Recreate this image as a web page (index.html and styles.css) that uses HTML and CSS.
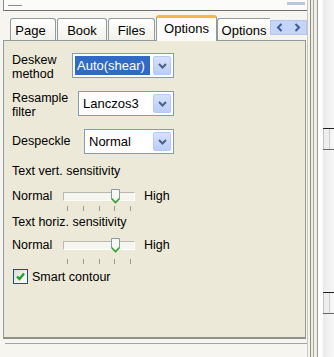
FILE: index.html
```html
<!DOCTYPE html>
<html lang="en">
<head>
    <meta charset="UTF-8">
    <title>Options</title>
    <link rel="stylesheet" href="styles.css">
</head>
<body>
    <div class="window">
        <div class="main">
            <div class="topbar">
                <span class="dash"></span>
                <span class="grip"></span>
            </div>
            <div class="tabs">
                <div class="tab tab-page">Page</div>
                <div class="tab tab-book">Book</div>
                <div class="tab tab-files">Files</div>
                <div class="tab tab-active">Options</div>
                <div class="tab tab-cut">Options</div>
                <div class="tab-scroll">
                    <svg width="8" height="9" viewBox="0 0 8 9"><polyline points="5.5,1 2,4.5 5.5,8" fill="none" stroke="#3d5a9a" stroke-width="2"/></svg>
                    <svg width="8" height="9" viewBox="0 0 8 9"><polyline points="2.5,1 6,4.5 2.5,8" fill="none" stroke="#3d5a9a" stroke-width="2"/></svg>
                </div>
            </div>
            <div class="panel">
                <div class="field field-deskew">
                    <div class="label">Deskew<br>method</div>
                    <div class="combo combo-deskew">
                        <span class="value selected">Auto(shear)</span>
                        <span class="drop"><svg width="9" height="6" viewBox="0 0 9 6"><polyline points="1,1 4.5,4.5 8,1" fill="none" stroke="#4d6185" stroke-width="2"/></svg></span>
                    </div>
                </div>
                <div class="field field-resample">
                    <div class="label">Resample<br>filter</div>
                    <div class="combo combo-resample">
                        <span class="value">Lanczos3</span>
                        <span class="drop"><svg width="9" height="6" viewBox="0 0 9 6"><polyline points="1,1 4.5,4.5 8,1" fill="none" stroke="#4d6185" stroke-width="2"/></svg></span>
                    </div>
                </div>
                <div class="field field-despeckle">
                    <div class="label">Despeckle</div>
                    <div class="combo combo-despeckle">
                        <span class="value">Normal</span>
                        <span class="drop"><svg width="9" height="6" viewBox="0 0 9 6"><polyline points="1,1 4.5,4.5 8,1" fill="none" stroke="#4d6185" stroke-width="2"/></svg></span>
                    </div>
                </div>

                <div class="caption caption-vert">Text vert. sensitivity</div>
                <div class="slider-row slider-vert">
                    <span class="slider-label">Normal</span>
                    <div class="track">
                        <svg class="thumb" width="11" height="15" viewBox="0 0 11 15">
                            <path d="M1.5 0.5 H9.5 V9.5 L5.5 13.5 L1.5 9.5 Z" fill="#f7f7f4" stroke="#8a97a6"/>
                            <polyline points="1.5,9.5 5.5,13.5 9.5,9.5" fill="none" stroke="#2aa02a" stroke-width="1.6"/>
                        </svg>
                    </div>
                    <span class="slider-high">High</span>
                </div>
                <div class="ticks ticks-vert"><i></i><i></i><i></i><i></i><i></i></div>

                <div class="caption caption-horiz">Text horiz. sensitivity</div>
                <div class="slider-row slider-horiz">
                    <span class="slider-label">Normal</span>
                    <div class="track">
                        <svg class="thumb" width="11" height="15" viewBox="0 0 11 15">
                            <path d="M1.5 0.5 H9.5 V9.5 L5.5 13.5 L1.5 9.5 Z" fill="#f7f7f4" stroke="#8a97a6"/>
                            <polyline points="1.5,9.5 5.5,13.5 9.5,9.5" fill="none" stroke="#2aa02a" stroke-width="1.6"/>
                        </svg>
                    </div>
                    <span class="slider-high">High</span>
                </div>
                <div class="ticks ticks-horiz"><i></i><i></i><i></i><i></i><i></i></div>

                <label class="check-row">
                    <span class="checkbox">
                        <svg width="11" height="11" viewBox="0 0 11 11"><polyline points="2,5.5 4.5,8 9,2.5" fill="none" stroke="#21a121" stroke-width="2.4"/></svg>
                    </span>
                    <span>Smart contour</span>
                </label>
            </div>
            <div class="bottom-edge"></div>
        </div>
        <div class="side">
            <div class="side-lines"></div>
            <div class="scroll-strip">
                <div class="scroll-mark mark-top"></div>
                <div class="scroll-mark mark-bottom"></div>
            </div>
        </div>
    </div>
</body>
</html>
```

FILE: styles.css
```css
* {
    box-sizing: border-box;
}
body {
    margin: 0;
    background: #f6f5ef;
    font-family: "Liberation Sans", Arial, sans-serif;
    font-size: 12.5px;
    color: #000;
}
.window {
    display: flex;
    width: 334px;
    height: 357px;
    overflow: hidden;
}
.main {
    width: 307px;
    flex: none;
}

/* strip above the tabs */
.topbar {
    margin-left: 3px;
    height: 11px;
    border-left: 1px solid #8c8c8c;
    border-bottom: 1px solid #6f6f6f;
    background: #fbfbf9;
    display: flex;
    align-items: flex-start;
    justify-content: space-between;
    padding: 0 2px 0 4px;
}
.dash {
    width: 14px;
    height: 1px;
    margin-top: 5px;
    background: #8c8c8c;
}
.grip {
    width: 18px;
    height: 3px;
    margin-top: 2px;
    background: #b9c6e0;
}

/* tabs */
.tabs {
    display: flex;
    align-items: flex-end;
    height: 29px;
    padding-left: 10px;
    background: #f6f5ef;
}
.tab {
    height: 22px;
    border: 1px solid #919b9c;
    border-bottom: none;
    border-radius: 3px 3px 0 0;
    background: linear-gradient(#ffffff, #f2f1ea);
    font-size: 13px;
    line-height: 24px;
    text-align: center;
    margin-right: 1px;
}
.tab-page { width: 46px; padding-right: 5px; }
.tab-book { width: 50px; }
.tab-files { width: 47px; }
.tab-active {
    width: 61px;
    height: 26px;
    margin-bottom: -1px;
    margin-right: 0;
    line-height: 22px;
    border-top: 3px solid #f3b64a;
    background: #fcfcfa;
    position: relative;
    z-index: 1;
}
.tab-cut {
    width: 53px;
    margin-right: 0;
    border-right: none;
    border-radius: 3px 0 0 0;
}
.tab-scroll {
    width: 37px;
    height: 15px;
    margin-bottom: 5px;
    background: #c6d5f6;
    border: 1px solid #b4c6ee;
    display: flex;
    align-items: center;
    justify-content: space-around;
}

/* panel */
.panel {
    margin-left: 3px;
    width: 303px;
    height: 299px;
    border: 1px solid #919b9c;
    border-bottom: 2px solid #8f8f88;
    background: #ece9d8;
    padding: 12px 0 0 8px;
}
.field {
    display: flex;
    align-items: flex-start;
    width: 162px;
    margin-bottom: 10px;
}
.label {
    line-height: 13.5px;
    margin-top: 1px;
}
.field-despeckle .label {
    margin-top: 6px;
}
.combo {
    margin-left: auto;
    height: 25px;
    border: 1px solid #7f9db9;
    background: #fff;
    display: flex;
    align-items: center;
    padding: 2px;
}
.combo-deskew { width: 102px; }
.combo-resample { width: 96px; }
.combo-despeckle { width: 90px; }
.value {
    flex: 1;
    height: 19px;
    line-height: 19px;
    padding-left: 2px;
    font-size: 13px;
    white-space: nowrap;
}
.value.selected {
    background: #316ac5;
    color: #fff;
    margin-right: 3px;
}
.drop {
    width: 18px;
    height: 19px;
    border: 1px solid #b7c9f1;
    border-radius: 2px;
    background: linear-gradient(#d6e2fd, #b9cdf7);
    display: flex;
    align-items: center;
    justify-content: center;
}

/* sliders */
.caption {
    line-height: 15px;
}
.caption-vert { margin-top: 1px; }
.caption-horiz { margin-top: 4px; }
.slider-row {
    display: flex;
    align-items: center;
    height: 16px;
}
.slider-vert { margin-top: 9px; }
.slider-horiz { margin-top: 7px; }
.slider-label {
    width: 51px;
}
.track {
    position: relative;
    width: 72px;
    height: 9px;
    border: 1px solid #b8b8b0;
    border-right-color: #fff;
    border-bottom-color: #fff;
    background: #f6f6f1;
}
.thumb {
    position: absolute;
    left: 46px;
    top: -4px;
}
.slider-high {
    margin-left: 9px;
}
.ticks {
    display: flex;
    justify-content: space-between;
    width: 72px;
    height: 5px;
    margin-left: 51px;
    padding: 0 4px;
}
.ticks i {
    width: 1px;
    background: #9a9a92;
}
.ticks-vert { margin-top: 2px; }
.ticks-horiz { margin-top: 6px; }

/* checkbox */
.check-row {
    display: flex;
    align-items: center;
    margin-top: 5px;
    margin-left: 1px;
    height: 15px;
}
.checkbox {
    width: 15px;
    height: 15px;
    border: 1px solid #1c5180;
    background: linear-gradient(135deg, #dcdcd5, #ffffff);
    display: flex;
    align-items: center;
    justify-content: center;
    margin-right: 4px;
}

.bottom-edge {
    margin-left: 5px;
    width: 305px;
    height: 5px;
    border-bottom: 1px solid #a6a59c;
}

/* right side frame */
.side {
    flex: 1;
    display: flex;
}
.side-lines {
    width: 11px;
    border-left: 1px solid #c8c7bd;
    border-right: 1px solid #9d9c94;
    background: linear-gradient(90deg, #f4f3ec 0 2px, #8f8e86 2px 3px, #eeede4 3px 5px, #a9a89f 5px 6px, #efeee6 6px);
}
.scroll-strip {
    flex: 1;
    background: linear-gradient(90deg, #fdfdfd 0 5px, #ebebeb 5px, #f7f7f7);
    padding-left: 5px;
}
.scroll-mark {
    width: 11px;
    height: 22px;
    border-top: 1px solid #222;
    border-bottom: 1px solid #666;
    background: linear-gradient(90deg, #c4c4c4 0 1px, #eeeeee 1px 6px, #cfcfcf 6px 7px, transparent 7px);
}
.mark-top { margin-top: 128px; }
.mark-bottom { margin-top: 142px; }
```
